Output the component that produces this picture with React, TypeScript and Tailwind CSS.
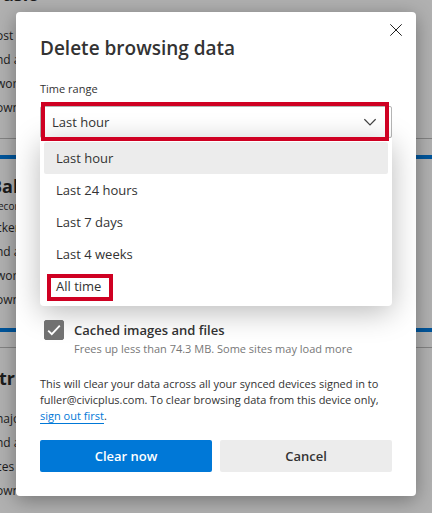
import React, { useState } from 'react';
import clsx from 'clsx';

const ranges = ['Last hour', 'Last 24 hours', 'Last 7 days', 'Last 4 weeks', 'All time'];

// Pricing cards on the page behind the dialog
const PageBehind: React.FC = () => (
  <main aria-hidden="true" className="text-xs leading-6 whitespace-nowrap text-[#1c1c1c]">
    <section className="h-[139px] overflow-hidden border-b border-[#838383]">
      <h2 className="-mt-[18px] mb-[18px] ml-[3px] text-lg leading-6 font-bold">asic</h2>
      <ul className="-ml-1">
        <li>ost for</li>
        <li>nd a</li>
        <li>work</li>
        <li>own</li>
      </ul>
    </section>
    <section className="mt-4 h-[177px] border-y-4 border-[#00569c]">
      <h2 className="-ml-2.5 pt-[15px] text-lg leading-6 font-bold">Bal</h2>
      <p className="-ml-0.5 mt-0.5 text-[10px] leading-3">econ</p>
      <ul className="-ml-1 mt-1">
        <li>cker</li>
        <li>nd a</li>
        <li>work</li>
        <li>own</li>
      </ul>
    </section>
    <section className="mt-[15px] border-t border-[#838383]">
      <h2 className="-ml-2.5 mt-[18px] text-lg leading-6 font-bold">str</h2>
      <ul className="-ml-1 mt-[17px]">
        <li>najor</li>
        <li>nd a</li>
        <li>ces</li>
        <li>own</li>
      </ul>
    </section>
  </main>
);

interface TimeRangeProps {
  value: string;
  onChange: (value: string) => void;
}

const TimeRange: React.FC<TimeRangeProps> = ({ value, onChange }) => (
  <div>
    <label htmlFor="time-range" className="block text-[11px] leading-4">
      Time range
    </label>
    <div className="relative mt-[9px]">
      <select
        id="time-range"
        value={value}
        onChange={(e) => onChange(e.target.value)}
        className="block h-8 w-full appearance-none rounded-xs border border-[#b5b5b5] bg-white px-[11px] pt-0.5 text-[13px] outline-none"
      >
        {ranges.map((range) => (
          <option key={range}>{range}</option>
        ))}
      </select>
      <svg
        className="pointer-events-none absolute top-3 right-4 h-2 w-3"
        viewBox="0 0 12 8"
        fill="none"
        stroke="#444"
        strokeWidth="1.2"
      >
        <path d="M.4 1.2 6 6.8l5.600-5.600" />
      </svg>

      {/* Open menu */}
      <div
        role="listbox"
        aria-label="Time range"
        className="absolute inset-x-0 top-8 rounded-b bg-white p-1 shadow-[0_6px_30px_rgba(0,0,0,0.28)]"
      >
        {ranges.map((range) => (
          <button
            key={range}
            type="button"
            role="option"
            aria-selected={range === value}
            onClick={() => onChange(range)}
            className={clsx(
              'relative block h-8 w-full rounded-xs px-3 pt-0.5 text-left text-[13px]',
              range === value && 'bg-[#ececec]',
            )}
          >
            {range}
            {range === 'All time' && (
              <span className="absolute top-1 left-[3px] h-[27px] w-[66px] border-4 border-[#cf0022]" />
            )}
          </button>
        ))}
      </div>

      <span className="pointer-events-none absolute -top-1 right-[3px] -bottom-[3px] left-px border-4 border-[#cf0022]" />
    </div>
  </div>
);

const DeleteDialog: React.FC = () => {
  const [range, setRange] = useState('Last hour');

  return (
    <div
      role="dialog"
      aria-labelledby="dialog-title"
      className="relative w-full max-w-[400px] rounded bg-white p-6 text-[#333] shadow-[0_4px_20px_rgba(0,0,0,0.35)]"
    >
      <button type="button" aria-label="Close" className="absolute top-1 right-1.5 p-2">
        <svg className="h-3 w-3" viewBox="0 0 12 12" fill="none" stroke="#222" strokeWidth="1">
          <path d="M.3.3l11.400 11.400M11.700.3.3 11.700" />
        </svg>
      </button>

      <h1 id="dialog-title" className="mb-[21px] text-[19px] leading-6 font-semibold">
        Delete browsing data
      </h1>

      <TimeRange value={range} onChange={setRange} />

      <label className="mt-[182px] flex gap-2.5 px-1">
        <span className="relative h-5 w-5 shrink-0">
          <input
            type="checkbox"
            defaultChecked
            className="peer block h-5 w-5 appearance-none rounded-xs border border-[#717171] checked:bg-[#717171]"
          />
          <svg
            className="pointer-events-none absolute inset-0 hidden h-5 w-5 peer-checked:block"
            viewBox="0 0 20 20"
            fill="none"
            stroke="white"
            strokeWidth="1.8"
          >
            <path d="M4.200 10.600l3.600 3.600 8-8.600" />
          </svg>
        </span>
        <span>
          <span className="block text-[13px] leading-5 font-semibold">Cached images and files</span>
          <span className="block text-[11px] leading-[18px] text-[#777]">
            Frees up less than 74.3 MB. Some sites may load more
          </span>
        </span>
      </label>

      <p className="mt-[18px] text-[11px] leading-4">
        This will clear your data across all your synced devices signed in to fuller@civicplus.com.
        To clear browsing data from this device only,{' '}
        <a href="#" className="border-b border-[#0078d7] text-[#0078d7]">
          sign out first
        </a>
        .
      </p>

      <div className="mt-4 flex gap-2 text-[13px] font-semibold">
        <button type="button" className="h-8 flex-1 rounded-xs bg-[#0078d7] pt-0.5 text-white">
          Clear now
        </button>
        <button type="button" className="h-8 flex-1 rounded-xs bg-[#ececec] pt-0.5">
          Cancel
        </button>
      </div>
    </div>
  );
};

const App: React.FC = () => (
  <div className="relative min-h-screen overflow-hidden bg-[#b1b1b1] font-['Open_Sans','Noto_Sans',sans-serif]">
    <PageBehind />
    <div className="absolute inset-0 flex items-start justify-center px-4 pt-3">
      <DeleteDialog />
    </div>
  </div>
);

export default App;
